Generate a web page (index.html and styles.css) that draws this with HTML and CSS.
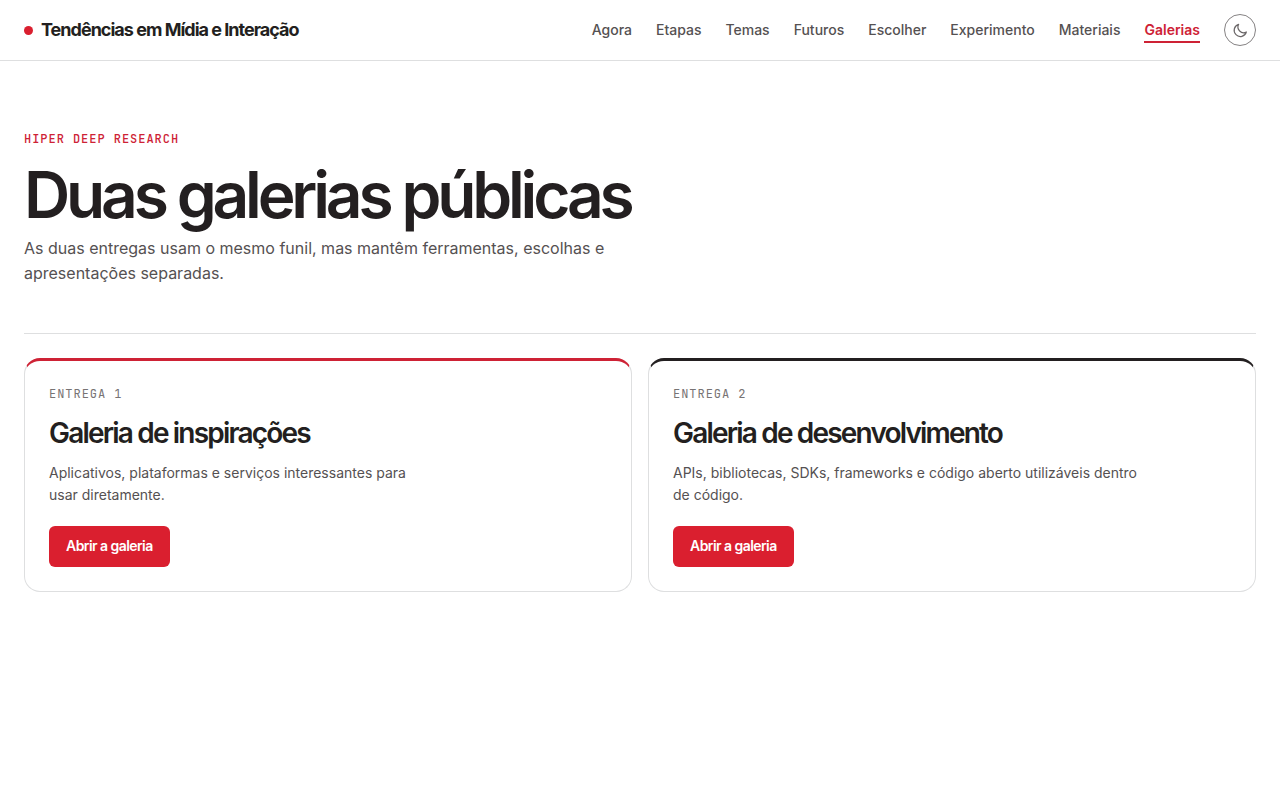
FILE: index.html
```html
<!DOCTYPE html>
<html lang="pt-BR">
<head>
<meta charset="utf-8">
<meta name="viewport" content="width=device-width, initial-scale=1">
<title>Galerias · Tendências em Mídia e Interação</title>
<link rel="stylesheet" href="styles.css">
</head>
<body>
<header class="site-header">
  <a class="brand" href="#"><span class="brand-dot"></span>Tendências em Mídia e Interação</a>
  <div class="header-end">
    <nav class="nav" aria-label="Principal">
      <a href="#">Agora</a>
      <a href="#">Etapas</a>
      <a href="#">Temas</a>
      <a href="#">Futuros</a>
      <a href="#">Escolher</a>
      <a href="#">Experimento</a>
      <a href="#">Materiais</a>
      <a class="active" href="#" aria-current="page">Galerias</a>
    </nav>
    <button class="theme-toggle" type="button" aria-label="Alternar tema">
      <svg width="16" height="16" viewBox="0 0 24 24" fill="none" stroke="currentColor" stroke-width="1.800" stroke-linecap="round" stroke-linejoin="round" aria-hidden="true"><path d="M21.500 15A9.300 9.300 0 1 1 10 3.500a8.500 8.500 0 0 0 11.500 11.500z"/></svg>
    </button>
  </div>
</header>
<main class="page">
  <section class="hero">
    <p class="eyebrow">HIPER DEEP RESEARCH</p>
    <h1 class="title">Duas galerias públicas</h1>
    <p class="lead">As duas entregas usam o mesmo funil, mas mantêm ferramentas, escolhas e apresentações separadas.</p>
  </section>
  <section class="cards">
    <article class="card card-red">
      <p class="label">ENTREGA 1</p>
      <h2 class="card-title">Galeria de inspirações</h2>
      <p class="card-text card-text-narrow">Aplicativos, plataformas e serviços interessantes para usar diretamente.</p>
      <a class="button" href="#">Abrir a galeria</a>
    </article>
    <article class="card card-dark">
      <p class="label">ENTREGA 2</p>
      <h2 class="card-title">Galeria de desenvolvimento</h2>
      <p class="card-text">APIs, bibliotecas, SDKs, frameworks e código aberto utilizáveis dentro de código.</p>
      <a class="button" href="#">Abrir a galeria</a>
    </article>
  </section>
</main>
</body>
</html>
```
FILE: styles.css
```css
:root {
  --ink: #231f20;
  --muted: #555152;
  --red: #da1f2f;
  --accent: #ce2235;
  --line: #dedfe0;
  --mono: "JetBrains Mono", "Liberation Mono", monospace;
}
* { box-sizing: border-box; }
body {
  margin: 0;
  background: #fff;
  color: var(--ink);
  font-family: Inter, "Liberation Sans", sans-serif;
  font-size: 16px;
  line-height: 25px;
}
h1, h2, p { margin: 0; }
a { color: inherit; text-decoration: none; }
.site-header {
  display: flex;
  align-items: center;
  justify-content: space-between;
  min-height: 61px;
  padding: 0 24px;
  border-bottom: 1px solid var(--line);
}
.brand {
  display: flex;
  align-items: center;
  gap: 8px;
  font-size: 18px;
  font-weight: 700;
  line-height: 26px;
  letter-spacing: -0.055em;
}
.brand-dot {
  width: 9px;
  height: 9px;
  border-radius: 50%;
  background: var(--red);
}
.header-end, .nav { display: flex; align-items: center; gap: 24px; }
.nav a {
  padding: 3px 0 1px;
  border-bottom: 2px solid transparent;
  color: var(--muted);
  font-size: 14px;
  font-weight: 500;
  line-height: 20px;
}
.nav .active { color: var(--accent); border-color: var(--accent); font-weight: 600; }
.theme-toggle {
  display: grid;
  place-items: center;
  width: 32px;
  height: 32px;
  padding: 0;
  border: 1px solid #858283;
  border-radius: 50%;
  background: none;
  color: #6b6768;
}
.page { padding: 68px 24px 48px; }
.hero { padding-bottom: 47px; border-bottom: 1px solid var(--line); }
.eyebrow, .label {
  font-family: var(--mono);
  font-size: 12px;
  line-height: 20px;
  letter-spacing: 0.08em;
}
.eyebrow { color: var(--accent); font-weight: 500; }
.title {
  margin: 14px 0 9px;
  font-size: 64px;
  font-weight: 600;
  line-height: 64px;
  letter-spacing: -0.065em;
}
.lead { max-width: 620px; color: var(--muted); }
.cards {
  display: grid;
  grid-template-columns: 1fr 1fr;
  gap: 16px;
  margin-top: 24px;
}
.card {
  padding: 23px 24px 24px;
  border: 1px solid var(--line);
  border-top: 3px solid;
  border-radius: 16px;
}
.card-red { border-top-color: var(--accent); }
.card-dark { border-top-color: var(--ink); }
.label { color: #777374; }
.card-title {
  margin: 12px 0;
  font-size: 28px;
  font-weight: 600;
  line-height: 34px;
  letter-spacing: -0.065em;
}
.card-text {
  max-width: 480px;
  margin-bottom: 20px;
  color: var(--muted);
  font-size: 14px;
  line-height: 22px;
}
.card-text-narrow { max-width: 380px; }
.button {
  display: inline-block;
  padding: 10px 17px 11px;
  border-radius: 6px;
  background: var(--red);
  color: #fff;
  font-size: 14px;
  font-weight: 600;
  line-height: 20px;
  letter-spacing: -0.04em;
  vertical-align: top;
}
@media (max-width: 960px) {
  .site-header { flex-wrap: wrap; padding: 12px 24px; gap: 12px; }
  .nav { flex-wrap: wrap; gap: 12px; }
}
@media (max-width: 640px) {
  .cards { grid-template-columns: 1fr; }
  .title { font-size: 40px; line-height: 44px; }
}
```
